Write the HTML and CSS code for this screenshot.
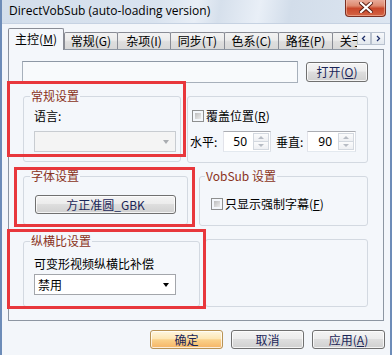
FILE: index.html
```html
<!DOCTYPE html>
<html lang="zh-CN">
<head>
<meta charset="utf-8">
<title>DirectVobSub</title>
<link rel="stylesheet" href="styles.css">
</head>
<body>
<div class="window">
  <div class="titlebar">
    <span class="title">DirectVobSub (auto-loading version)</span>
    <div class="close">
      <svg width="14" height="11" viewBox="0 0 14 11"><path d="M2 1 L12 10 M12 1 L2 10" stroke="#5a1d12" stroke-width="4" stroke-linecap="square"/><path d="M2 1 L12 10 M12 1 L2 10" stroke="#ffffff" stroke-width="2.2" stroke-linecap="square"/></svg>
    </div>
  </div>
  <div class="client">
    <div class="tabs">
      <div class="tab active">主控(<u>M</u>)</div>
      <div class="tab w54">常规(G)</div>
      <div class="tab w54 ov">杂项(I)</div>
      <div class="tab ov">同步(T)</div>
      <div class="tab ov">色系(C)</div>
      <div class="tab ov">路径(P)</div>
      <div class="tab ov">关于(A)</div>
      <div class="tab-arrows">
        <div class="arrow-btn"><svg width="6" height="7" viewBox="0 0 6 7"><path d="M4 1 L1.5 3.5 L4 6" fill="none" stroke="#1f2f6a" stroke-width="1.3"/></svg></div>
        <div class="arrow-btn"><svg width="6" height="7" viewBox="0 0 6 7"><path d="M2 1 L4.5 3.5 L2 6" fill="none" stroke="#1f2f6a" stroke-width="1.3"/></svg></div>
      </div>
    </div>
    <div class="panel">
      <div class="file-row">
        <div class="textbox"></div>
        <div class="btn open-btn">打开(<u>O</u>)</div>
      </div>
      <div class="row row1">
        <div class="group g-general">
          <div class="legend">常规设置</div>
          <div class="label lang">语言:</div>
          <div class="combo disabled"><span class="combo-arrow"></span></div>
        </div>
        <div class="group g-pos">
          <div class="check-row first"><span class="chk"></span><span>覆盖位置(<u>R</u>)</span></div>
          <div class="spin-row">
            <span class="spin-label">水平:</span>
            <div class="spin"><span class="spin-val">50</span><span class="spin-btns"><i class="up"></i><i class="down"></i></span></div>
            <span class="spin-label l2">垂直:</span>
            <div class="spin s2"><span class="spin-val">90</span><span class="spin-btns"><i class="up"></i><i class="down"></i></span></div>
          </div>
        </div>
      </div>
      <div class="row row2">
        <div class="group g-font">
          <div class="legend">字体设置</div>
          <div class="btn font-btn">方正准圆_GBK</div>
        </div>
        <div class="group g-vobsub">
          <div class="legend">VobSub 设置</div>
          <div class="check-row vs"><span class="chk"></span><span>只显示强制字幕(<u>F</u>)</span></div>
        </div>
      </div>
      <div class="row row3">
        <div class="group g-aspect">
          <div class="legend">纵横比设置</div>
          <div class="label aspect-label">可变形视频纵横比补偿</div>
          <div class="combo enabled"><span class="combo-text">禁用</span><span class="combo-arrow dark"></span></div>
        </div>
        <div class="group g-empty"></div>
      </div>
    </div>
    <div class="footer">
      <div class="btn default">确定</div>
      <div class="btn">取消</div>
      <div class="btn">应用(<u>A</u>)</div>
    </div>
  </div>
  <div class="mark m1"></div>
  <div class="mark m2"></div>
  <div class="mark m3"></div>
</div>
</body>
</html>
```
FILE: styles.css
```css
* { box-sizing: border-box; }
html, body { margin: 0; padding: 0; background: #f3f6fa; }
body {
  font-family: "Noto Sans CJK SC", "Noto Sans", sans-serif;
  font-size: 12px;
  color: #000;
}
u { text-decoration: underline; text-underline-offset: 1px; }

.window {
  position: relative;
  width: 392px;
  height: 355px;
  overflow: hidden;
  background: #f3f6fa;
  border-left: 2px solid #6d8cb8;
  border-right: 2px solid #6d8cb8;
  display: flex;
  flex-direction: column;
}

.titlebar {
  flex: none;
  height: 24px;
  display: flex;
  justify-content: space-between;
  align-items: flex-start;
  padding-left: 7px;
  background: linear-gradient(100deg, #d3deeb 0%, #d9e3ef 40%, #e8eef6 50%, #d6e0ec 56%, #e9eff7 66%, #d2ddea 74%, #dde6f1 100%);
  border-bottom: 1px solid #c6d2e2;
}
.title {
  font-family: "Open Sans", "Noto Sans", sans-serif;
  font-size: 12px;
  line-height: 16px;
  margin-top: 3px;
  color: #000;
}
.close {
  width: 41px;
  height: 18px;
  margin-right: 4px;
  margin-top: -1px;
  border: 1px solid #7c2f22;
  border-top: none;
  border-radius: 0 0 4px 4px;
  background: linear-gradient(#eab0a0 0%, #de8a70 40%, #c9482b 55%, #d46445 100%);
  box-shadow: inset 0 0 0 1px rgba(255, 220, 200, 0.45);
  display: flex;
  align-items: center;
  justify-content: center;
}

.client {
  flex: 1;
  padding: 4px 0 0 6px;
}

.tabs {
  position: relative;
  height: 21px;
  display: flex;
  align-items: flex-end;
  white-space: nowrap;
}
.tab {
  flex: none;
  width: 55px;
  height: 17px;
  border: 1px solid #898c95;
  border-bottom: none;
  border-radius: 2px 2px 0 0;
  background: linear-gradient(#f3f3f3 0%, #ebebeb 45%, #dedede 55%, #d8d8d8 100%);
  display: flex;
  align-items: center;
  justify-content: center;
  font-size: 12px;
  line-height: 14px;
  color: #000;
}
.tab.w54 { width: 54px; }
.tab.ov { margin-left: -1px; }
.tab.active {
  width: 56px;
  height: 22px;
  margin-bottom: -1px;
  position: relative;
  z-index: 2;
  background: #f4f7fb;
  padding-bottom: 2px;
}
.tab-arrows {
  position: absolute;
  right: 0;
  top: 0;
  width: 33px;
  height: 21px;
  background: #f3f6fa;
  display: flex;
  align-items: flex-start;
  padding-top: 4px;
  z-index: 3;
}
.arrow-btn {
  width: 14px;
  height: 13px;
  border: 1px solid #b9c2cf;
  background: linear-gradient(#f7f9fb, #e3e8ee);
  display: flex;
  align-items: center;
  justify-content: center;
}
.arrow-btn + .arrow-btn { margin-left: 0; }

.panel {
  width: 376px;
  height: 272px;
  border: 1px solid #8d96a2;
  background: #f4f7fb;
}

.file-row {
  display: flex;
  align-items: flex-start;
  margin: 11px 0 0 13px;
}
.textbox {
  width: 276px;
  height: 22px;
  border: 1px solid #a7b0bb;
  border-top-color: #8e98a5;
  background: #f8fafc;
}
.btn {
  border: 1px solid #707070;
  border-radius: 3px;
  background: linear-gradient(#f4f4f4 0%, #ececec 45%, #dedede 50%, #d0d0d0 100%);
  box-shadow: inset 0 0 0 1px rgba(255, 255, 255, 0.75);
  color: #1b2658;
  font-size: 12px;
  line-height: 14px;
  display: flex;
  align-items: center;
  justify-content: center;
}
.open-btn {
  width: 62px;
  height: 20px;
  margin: 1px 0 0 8px;
}

.row {
  display: flex;
  align-items: flex-start;
  margin-left: 14px;
}
.row1 { margin-top: 13px; }
.row2 { margin-top: 13px; }
.row3 { margin-top: 15px; }

.group {
  border: 1px solid #d3d9e1;
  border-radius: 3px;
  padding-left: 10px;
  flex: none;
}
.legend {
  width: fit-content;
  margin: -8px 0 0 -4px;
  padding: 0 1px;
  background: #f4f7fb;
  color: #8a3322;
  font-size: 12px;
  line-height: 14px;
}
.label {
  font-size: 12px;
  line-height: 14px;
}

.g-general { width: 158px; height: 66px; }
.lang { margin-top: 6px; }
.combo {
  position: relative;
  width: 142px;
  height: 21px;
  margin-top: 8px;
  display: flex;
  align-items: center;
}
.combo.disabled {
  border: 1px solid #c8ccd1;
  background: #f4f4f4;
}
.combo.enabled {
  border: 1px solid #a3a6ab;
  background: #ffffff;
  margin-top: 3px;
}
.combo-text { padding-left: 3px; line-height: 14px; }
.combo-arrow {
  position: absolute;
  right: 6px;
  top: 8px;
  width: 0;
  height: 0;
  border-left: 3.5px solid transparent;
  border-right: 3.5px solid transparent;
  border-top: 4px solid #a9acb0;
}
.combo-arrow.dark { border-top-color: #000; top: 8px; }

.g-pos {
  width: 181px;
  height: 67px;
  margin-left: 6px;
  padding-left: 0;
}
.check-row {
  display: flex;
  align-items: center;
  line-height: 14px;
  height: 14px;
}
.check-row.first { margin: 12px 0 0 4px; }
.chk {
  flex: none;
  width: 12px;
  height: 12px;
  border: 1px solid #8e8f8f;
  padding: 2px;
  background: #f4f4f4 linear-gradient(135deg, #bdbdbd, #ececec) content-box;
  margin-right: 2px;
}
.spin-row {
  display: flex;
  align-items: center;
  margin: 8px 0 0 2px;
  height: 21px;
}
.spin-label { line-height: 14px; width: 33px; flex: none; }
.spin-label.l2 { width: 31px; margin-left: 5px; }
.spin {
  width: 48px;
  height: 21px;
  border: 1px solid #abadb3;
  border-color: #abadb3 #dbdfe6 #e3e9ef #e2e3ea;
  background: #fff;
  display: flex;
  align-items: center;
  justify-content: flex-end;
  padding: 1px;
}
.spin.s2 { width: 49px; }
.spin-val {
  font-family: "Noto Sans", sans-serif;
  font-size: 12px;
  line-height: 14px;
  margin-right: 6px;
}
.spin-btns {
  width: 16px;
  height: 17px;
  display: flex;
  flex-direction: column;
}
.spin-btns i {
  flex: 1;
  border: 1px solid #d3d8df;
  background: linear-gradient(#fbfbfc, #eef0f3);
  position: relative;
}
.spin-btns i.down { border-top: none; }
.spin-btns i::after {
  content: "";
  position: absolute;
  left: 4px;
  width: 0;
  height: 0;
  border-left: 3px solid transparent;
  border-right: 3px solid transparent;
}
.spin-btns i.up::after { top: 2px; border-bottom: 3px solid #b7bcc4; }
.spin-btns i.down::after { top: 2px; border-top: 3px solid #b7bcc4; }

.g-font { width: 165px; height: 49px; }
.font-btn {
  width: 141px;
  height: 19px;
  margin: 12px 0 0 1px;
}
.g-vobsub {
  width: 169px;
  height: 50px;
  margin-left: 11px;
}
.g-vobsub .legend { margin-left: -5px; }
.check-row.vs { margin: 14px 0 0 1px; }

.g-aspect { width: 177px; height: 66px; }
.aspect-label { margin-top: 9px; }
.g-empty {
  width: 163px;
  height: 68px;
  margin: -2px 0 0 5px;
}

.footer {
  display: flex;
  justify-content: flex-end;
  gap: 8px;
  margin-top: 9px;
  padding-right: 5px;
}
.footer .btn {
  width: 73px;
  height: 19px;
}
.footer .btn.default {
  border-color: #b89356;
  background: linear-gradient(#fef6e0 0%, #fde7b6 45%, #fad18a 52%, #f5b465 100%);
}

.mark {
  position: absolute;
  border: 3px solid #e8373c;
  pointer-events: none;
}
.m1 { left: 5px; top: 81px; width: 179px; height: 76px; }
.m2 { left: 12px; top: 167px; width: 181px; height: 60px; }
.m3 { left: 5px; top: 229px; width: 199px; height: 80px; }
```
